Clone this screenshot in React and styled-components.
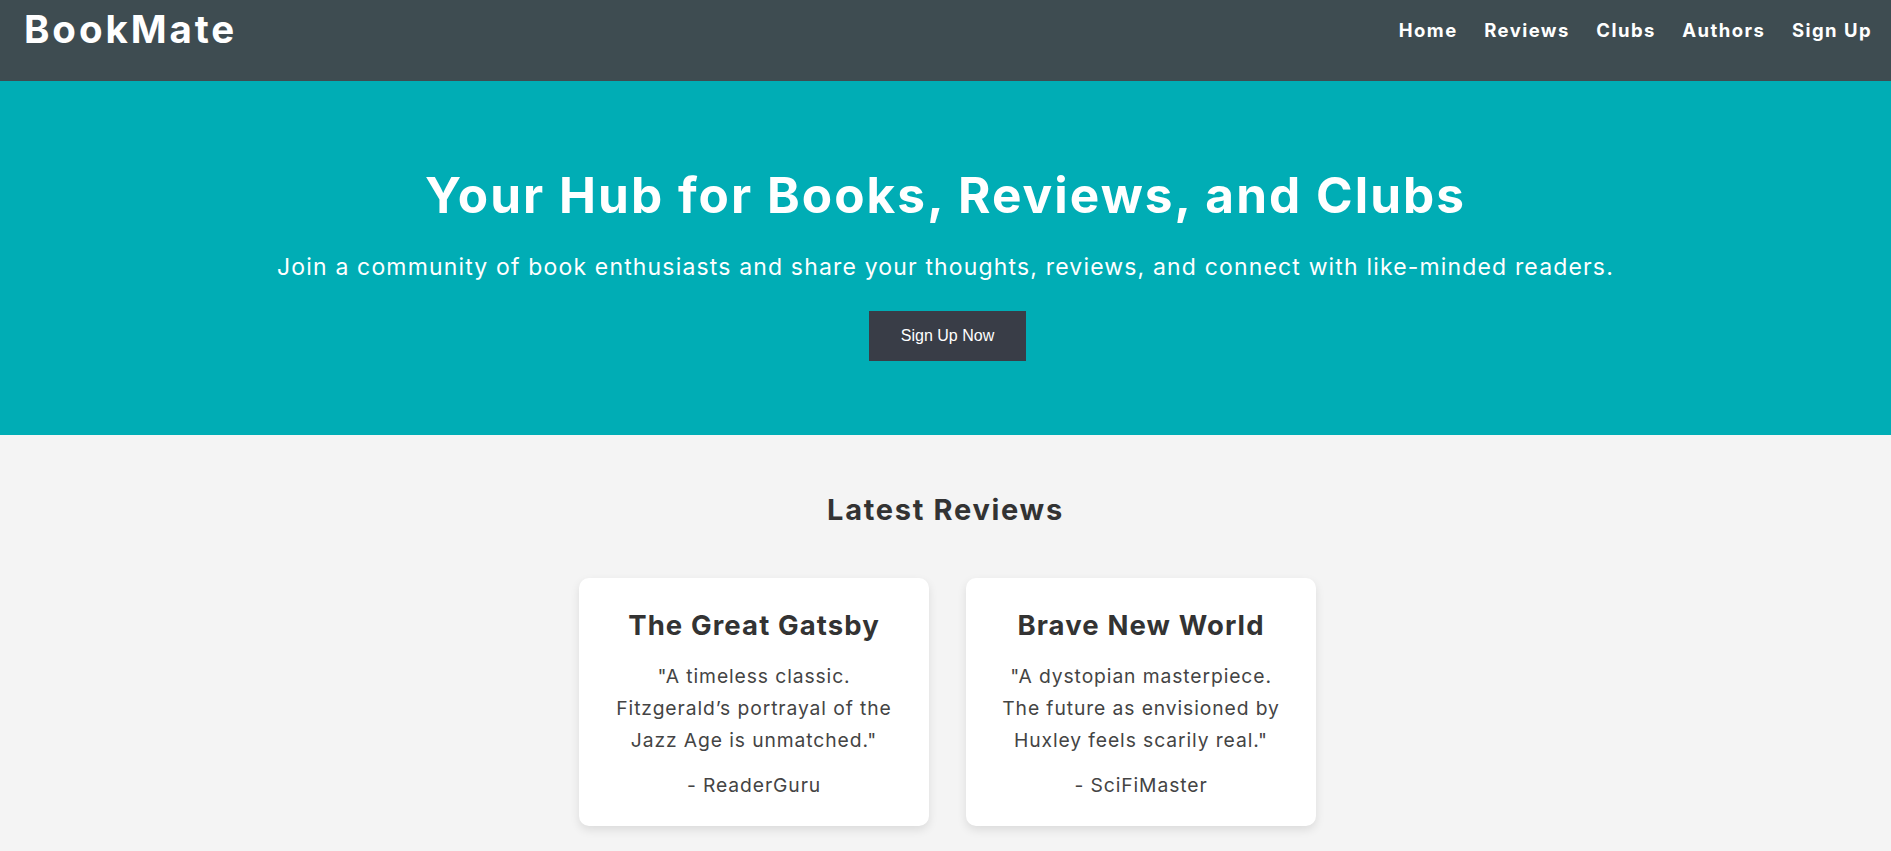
import React from "react";
import styled, { createGlobalStyle } from "styled-components";

const Global = createGlobalStyle`
  html, body { margin: 0; padding: 0; }
  body {
    font-family: Inter, "Open Sans", sans-serif;
    background: #f4f4f4;
    color: #333333;
  }
  * { box-sizing: border-box; }
`;

const Header = styled.header`
  height: 81px;
  background: #3e4c51;
  display: flex;
  justify-content: space-between;
  align-items: flex-start;
  padding: 0 19px 0 24px;
`;

const Logo = styled.h1`
  margin: 0;
  padding-top: 6px;
  font-size: 38.5px;
  line-height: 46px;
  font-weight: 700;
  letter-spacing: 2.9px;
  color: #ffffff;
`;

const Nav = styled.nav`
  display: flex;
  gap: 26.5px;
  padding-top: 17px;
`;

const NavLink = styled.a`
  color: #ffffff;
  font-size: 18.5px;
  line-height: 26px;
  font-weight: 700;
  letter-spacing: 1.45px;
  text-decoration: none;
`;

const Hero = styled.section`
  background: #00adb5;
  height: 354px;
  display: flex;
  flex-direction: column;
  align-items: center;
  padding-top: 84px;
  color: #ffffff;
  text-align: center;
`;

const HeroTitle = styled.h2`
  margin: 0;
  font-size: 49.5px;
  line-height: 60px;
  font-weight: 700;
  letter-spacing: 2.05px;
`;

const HeroText = styled.p`
  margin: 27px 0 0;
  font-size: 23px;
  line-height: 30px;
  font-weight: 400;
  letter-spacing: 1.16px;
`;

const Button = styled.button`
  margin: 29px 0 0 4px;
  height: 50px;
  padding: 0 32px;
  border: none;
  background: #393d47;
  color: #ffffff;
  font-family: "Liberation Sans", Arial, sans-serif;
  font-size: 16px;
  cursor: pointer;
`;

const Reviews = styled.section`
  display: flex;
  flex-direction: column;
  align-items: center;
  padding-top: 55px;
  padding-bottom: 40px;
`;

const SectionTitle = styled.h2`
  margin: 0;
  font-size: 29px;
  line-height: 40px;
  font-weight: 700;
  letter-spacing: 1.7px;
  color: #333333;
`;

const CardRow = styled.div`
  display: flex;
  gap: 37px;
  margin-top: 48px;
  padding-left: 4px;
`;

const Card = styled.article`
  width: 350px;
  height: 248px;
  background: #ffffff;
  border-radius: 10px;
  box-shadow: 0 4px 10px rgba(0, 0, 0, 0.1);
  padding: 29px 16px 0;
  text-align: center;
`;

const CardTitle = styled.h3`
  margin: 0;
  font-size: 27.5px;
  line-height: 36px;
  font-weight: 700;
  letter-spacing: 1.1px;
  color: #333333;
`;

const Quote = styled.p`
  margin: 17px 0 0;
  font-size: 19.3px;
  line-height: 32px;
  letter-spacing: 0.9px;
  color: #444444;
`;

const Author = styled.p`
  margin: 13px 0 0;
  font-size: 19.3px;
  line-height: 32px;
  letter-spacing: 0.9px;
  color: #444444;
`;

const reviews = [
  {
    title: "The Great Gatsby",
    lines: ['"A timeless classic.', "Fitzgerald\u2019s portrayal of the", 'Jazz Age is unmatched."'],
    author: "- ReaderGuru",
  },
  {
    title: "Brave New World",
    lines: ['"A dystopian masterpiece.', "The future as envisioned by", 'Huxley feels scarily real."'],
    author: "- SciFiMaster",
  },
];

export default function App() {
  return (
    <>
      <Global />
      <Header>
        <Logo>BookMate</Logo>
        <Nav>
          {["Home", "Reviews", "Clubs", "Authors", "Sign Up"].map((l) => (
            <NavLink key={l} href="#">{l}</NavLink>
          ))}
        </Nav>
      </Header>
      <Hero>
        <HeroTitle>Your Hub for Books, Reviews, and Clubs</HeroTitle>
        <HeroText>
          Join a community of book enthusiasts and share your thoughts, reviews, and connect with like-minded readers.
        </HeroText>
        <Button>Sign Up Now</Button>
      </Hero>
      <Reviews>
        <SectionTitle>Latest Reviews</SectionTitle>
        <CardRow>
          {reviews.map((r) => (
            <Card key={r.title}>
              <CardTitle>{r.title}</CardTitle>
              <Quote>
                {r.lines.map((l, i) => (
                  <React.Fragment key={i}>
                    {l}
                    {i < r.lines.length - 1 && <br />}
                  </React.Fragment>
                ))}
              </Quote>
              <Author>{r.author}</Author>
            </Card>
          ))}
        </CardRow>
      </Reviews>
    </>
  );
}
